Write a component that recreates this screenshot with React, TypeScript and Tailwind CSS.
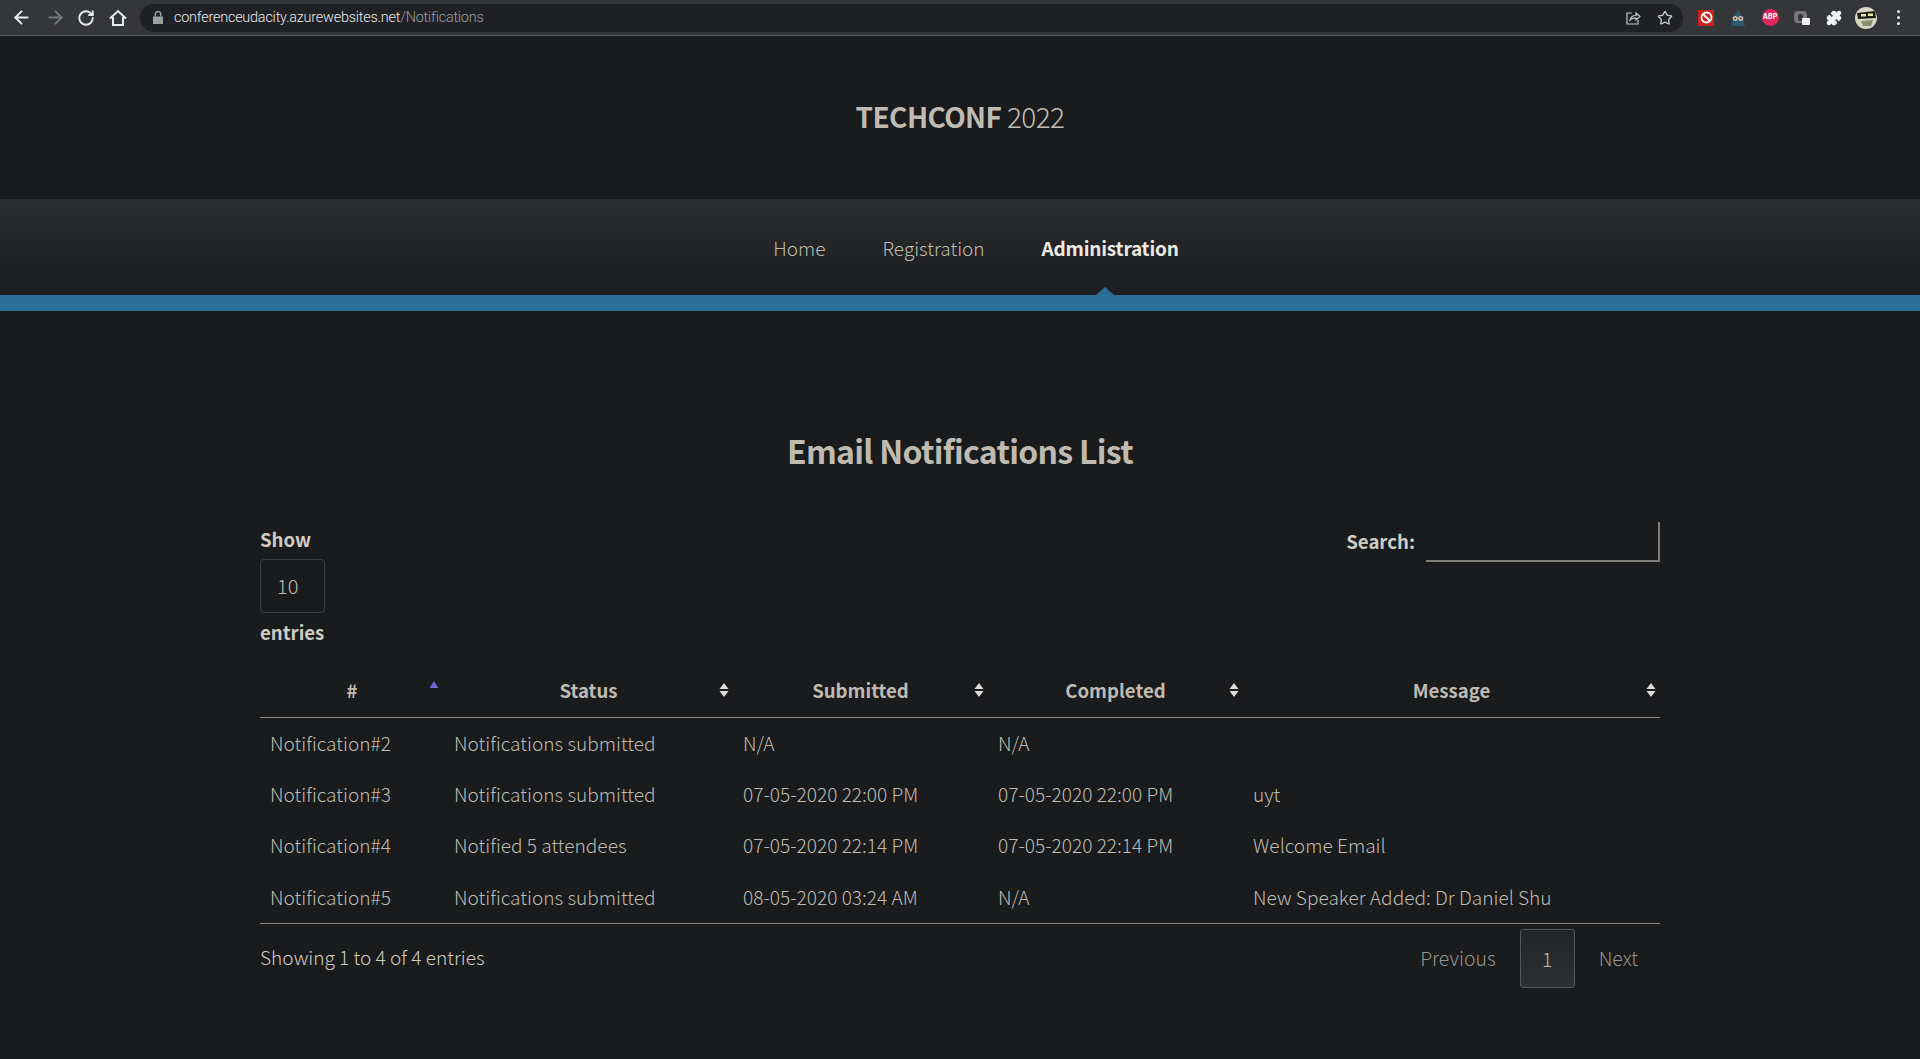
import { ArrowLeft, ArrowRight, Puzzle, RotateCw, Star } from "lucide-react";

const rows = [
  ["Notification#2", "Notifications submitted", "N/A", "N/A", ""],
  ["Notification#3", "Notifications submitted", "07-05-2020 22:00 PM", "07-05-2020 22:00 PM", "uyt"],
  ["Notification#4", "Notified 5 attendees", "07-05-2020 22:14 PM", "07-05-2020 22:14 PM", "Welcome Email"],
  ["Notification#5", "Notifications submitted", "08-05-2020 03:24 AM", "N/A", "New Speaker Added: Dr Daniel Shu"],
];

const columns = [
  { label: "#", width: "w-[184px]" },
  { label: "Status", width: "w-[289px]" },
  { label: "Submitted", width: "w-[255px]" },
  { label: "Completed", width: "w-[255px]" },
  { label: "Message", width: "w-[417px]" },
];

const SortArrows = ({ active }: { active?: boolean }) => (
  <svg width="10" height="14" viewBox="0 0 10 14" className={active ? "absolute right-[5px] top-[16px]" : "absolute right-[4px] top-[18px]"}>
    {active ? (
      <path d="M0.5 7 L5 0 L9.5 7 Z" fill="#7265d6" />
    ) : (
      <>
        <path d="M0.5 6 L5 0 L9.5 6 Z" fill="#dcdcdc" />
        <path d="M0.5 8 L5 14 L9.5 8 Z" fill="#dcdcdc" />
      </>
    )}
  </svg>
);

const Toolbar = () => (
  <div className="h-[36px] bg-[#35363a] border-b border-[#5f6064] flex items-center text-[#e8eaed] font-['Inter',sans-serif]">
    <div className="flex items-center pl-[11px]">
      <ArrowLeft size={21} strokeWidth={2.2} />
      <ArrowRight size={21} strokeWidth={2.2} className="ml-[13px] text-[#77787b]" />
      <RotateCw size={18} strokeWidth={2.5} className="ml-[11px]" />
      <svg width="20" height="20" viewBox="0 0 20 20" fill="none" stroke="currentColor" strokeWidth="2" className="ml-[13px]">
        <path d="M2 10.5 L10 3 L18 10.5 M5 9 V17 H15 V9" />
      </svg>
    </div>
    <div className="ml-[12px] h-[28px] w-[1543px] rounded-full bg-[#202124] flex items-center pl-[13px] pr-[10px]">
      <svg width="10" height="13" viewBox="0 0 10 13" fill="#9aa0a6">
        <path d="M0 5.5 H10 V13 H0 Z" />
        <path d="M2.2 5.5 V3.4 a2.8 2.8 0 0 1 5.6 0 V5.5" fill="none" stroke="#9aa0a6" strokeWidth="1.4" />
      </svg>
      <span className="ml-[11px] text-[14.4px] tracking-[-0.2px] font-['Roboto',sans-serif]">
        conferenceudacity.azurewebsites.net<span className="text-[#9aa0a6]">/Notifications</span>
      </span>
      <div className="ml-auto flex items-center gap-[16px] text-[#c4c7c5]">
        <svg width="16" height="16" viewBox="0 0 16 16" fill="none" stroke="currentColor" strokeWidth="1.2">
          <path d="M7 3 H2 V14 H13 V10" />
          <path d="M5 10 C5.5 7 8 5.5 11 5.5 V3 L15 6.5 L11 10 V7.8 C8.5 7.8 6.5 8.3 5 10 Z" />
        </svg>
        <Star size={16} strokeWidth={2} />
      </div>
    </div>
    <div className="ml-[7px] flex items-center">
      <div className="w-[32px] flex justify-center">
        <div className="w-[16px] h-[16px] bg-[#c9221d] flex items-center justify-center">
          <svg width="13" height="13" viewBox="0 0 13 13" fill="none" stroke="white" strokeWidth="1.8">
            <circle cx="6.5" cy="6.5" r="5" />
            <path d="M3 3 L10 10" />
          </svg>
        </div>
      </div>
      <div className="w-[32px] flex justify-center">
        <svg width="16" height="16" viewBox="0 0 16 16">
          <path d="M8 0 L11.5 6 L15 16 L1 16 L4.5 6 Z" fill="#2e5a70" />
          <circle cx="5.2" cy="8.5" r="2.5" fill="#c9c3b8" />
          <circle cx="10.8" cy="8.5" r="2.5" fill="#c9c3b8" />
          <circle cx="5.2" cy="8.5" r="1" fill="#8a2b1d" />
          <circle cx="10.8" cy="8.5" r="1" fill="#8a2b1d" />
        </svg>
      </div>
      <div className="w-[32px] flex justify-center">
        <div className="w-[17px] h-[17px] rounded-full bg-[#e0265c] text-white text-[7px] font-bold flex items-center justify-center">
          ABP
        </div>
      </div>
      <div className="w-[32px] flex justify-center">
        <svg width="16" height="16" viewBox="0 0 16 16">
          <rect x="0" y="1" width="13" height="12" rx="4" fill="#77787b" />
          <rect x="4" y="4" width="5" height="7" rx="2" fill="#35363a" />
          <rect x="8" y="8" width="8" height="7" rx="1" fill="#f1f1f1" />
        </svg>
      </div>
      <div className="w-[32px] flex justify-center">
        <Puzzle size={16} fill="#f1f3f4" className="text-[#f1f3f4]" />
      </div>
      <div className="w-[32px] flex justify-center">
        <svg width="22" height="22" viewBox="0 0 22 22">
          <circle cx="11" cy="11" r="11" fill="#d6d8c4" />
          <path d="M2 6 L20 4 L21 11 L3 12 Z" fill="#1d1f1c" />
          <rect x="6" y="7" width="5" height="2.5" fill="#e8e6a0" />
          <rect x="13" y="6.5" width="5" height="2.5" fill="#e8e6a0" />
          <path d="M6 14 L18 13 L16 19 L8 19 Z" fill="#8b8f70" />
        </svg>
      </div>
      <div className="w-[32px] flex flex-col items-center gap-[3px]">
        <span className="w-[3px] h-[3px] rounded-full bg-[#e8eaed]" />
        <span className="w-[3px] h-[3px] rounded-full bg-[#e8eaed]" />
        <span className="w-[3px] h-[3px] rounded-full bg-[#e8eaed]" />
      </div>
    </div>
  </div>
);

export default function App() {
  return (
    <div className="h-[1059px] overflow-hidden bg-[#1a1b1d] text-[#bfbbb2] font-['Noto_Sans_CJK_SC','Source_Sans_Pro',sans-serif] font-light">
      <Toolbar />

      <header className="h-[163px] flex justify-center pt-[58px]">
        <h1 className="text-[28px] leading-[44px] tracking-[-0.6px]">
          <span className="font-semibold">TECHCONF</span> <span className="font-light">2022</span>
        </h1>
      </header>

      <nav className="h-[96px] bg-gradient-to-b from-[#2b2c2e] to-[#1c1d1f] flex justify-center gap-[57px] pt-[34px] pl-[32px] text-[19px] leading-[30px]">
        <a>Home</a>
        <a>Registration</a>
        <a className="relative font-semibold tracking-[-0.2px] text-[#ece9e2]">
          Administration
          <span className="absolute left-[54px] top-[54px] w-0 h-0 border-x-[9px] border-x-transparent border-b-[8px] border-b-[#2a7096]" />
        </a>
      </nav>
      <div className="h-[16px] bg-[#2a7096]" />

      <main className="w-[1400px] mx-auto">
        <h2 className="mt-[114px] text-center text-[32px] leading-[50px] font-semibold tracking-[-0.7px]">
          Email Notifications List
        </h2>

        <div className="mt-[45px] flex justify-between items-start font-semibold text-[18.6px] text-[#cfccc4]">
          <div className="flex flex-col items-start">
            <span className="leading-[30px] mt-[4px]">Show</span>
            <div className="mt-[5px] w-[65px] h-[54px] rounded-[4px] border border-[#3a3b3d] pl-[16px] flex items-center text-[20px] font-light text-[#bfbbb2]">
              10
            </div>
            <span className="leading-[30px] mt-[4px]">entries</span>
          </div>
          <div className="mt-[2px] flex items-center">
            <span className="leading-[30px] -mt-[2px]">Search:</span>
            <div className="ml-[11px] w-[234px] h-[40px] border-b-2 border-r-2 border-[#7f7e79]" />
          </div>
        </div>

        <table className="mt-[18px] w-[1400px] table-fixed border-collapse text-[19.1px]">
          <thead>
            <tr className="border-b border-[#8a8983]">
              {columns.map((c, i) => (
                <th key={c.label} className={`${c.width} relative h-[52px] pb-[2px] font-semibold text-center text-[18.6px]`}>
                  {c.label}
                  <SortArrows active={i === 0} />
                </th>
              ))}
            </tr>
          </thead>
          <tbody>
            {rows.map((row) => (
              <tr key={row[0]} className="h-[51.5px]">
                {row.map((cell, i) => (
                  <td key={i} className="px-[10px]">
                    {cell}
                  </td>
                ))}
              </tr>
            ))}
          </tbody>
        </table>

        <div className="border-t border-[#8a8983] flex justify-between">
          <span className="mt-[18px] text-[19.1px] leading-[30px] text-[#cfccc4]">Showing 1 to 4 of 4 entries</span>
          <div className="mt-[5px] flex items-center text-[19.4px] text-[#96958f] pr-[22px]">
            <span className="-mt-[1px]">Previous</span>
            <div className="ml-[24px] w-[55px] h-[59px] rounded-[3px] border border-[#55565a] bg-gradient-to-b from-[#232426] to-[#2e2f32] flex items-center justify-center text-[#bfbbb2]">
              1
            </div>
            <span className="ml-[24px] -mt-[1px]">Next</span>
          </div>
        </div>
      </main>
    </div>
  );
}
